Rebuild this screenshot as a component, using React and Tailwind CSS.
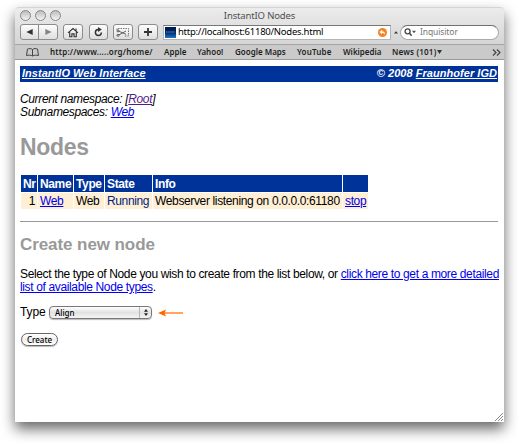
import React from "react";

const toolButton =
  "flex h-4 items-center justify-center rounded-[3px] border border-[#8c8c8c] bg-gradient-to-b from-[#fdfdfd] to-[#dedede]";

function ToolButton({ className, children }) {
  return <button className={`${toolButton} ${className}`}>{children}</button>;
}

function TrafficLight() {
  return <span className="size-[11px] rounded-full border border-[#878787] bg-gradient-to-b from-[#bdbdbd] to-[#f4f4f4]" />;
}

function TitleBar() {
  return (
    <div className="grid h-[15px] grid-cols-[60px_1fr_60px] items-center">
      <div className="flex gap-[4px] pl-[5px]">
        <TrafficLight />
        <TrafficLight />
        <TrafficLight />
      </div>
      <div className="text-center text-[9.5px] leading-none tracking-[-0.15px] text-[#505050]">InstantIO Nodes</div>
    </div>
  );
}

function Toolbar() {
  return (
    <div className="flex h-[21px] items-center pb-[3px] pl-[5px] pr-[5px]">
      <div className="flex w-[38px]">
        <ToolButton className="w-[19px] rounded-r-none">
          <svg width="7" height="6"><path d="M0.3 3 6.7 0v6z" fill="#333" /></svg>
        </ToolButton>
        <ToolButton className="-ml-px w-[20px] rounded-l-none">
          <svg width="7" height="6"><path d="M6.7 3 .3 0v6z" fill="#848484" /></svg>
        </ToolButton>
      </div>
      <ToolButton className="ml-[5px] w-5">
        <svg width="12" height="11" viewBox="0 0 12 11" fill="none" stroke="#333" strokeWidth="1.1">
          <path d="M1 5.900 6 1.500l5 4.400M2.700 5.200v4.600h2.200V6.900h2.200v2.900h2.200V5.200M9 1.500v2.200" />
        </svg>
      </ToolButton>
      <ToolButton className="ml-[6px] w-[19px]">
        <svg width="9" height="10" viewBox="0 0 9 10">
          <path d="M4.2 2.4A3 3 0 1 0 7.4 5.5" fill="none" stroke="#333" strokeWidth="1.5" />
          <path d="M4 0l3.8 2.5L4 5z" fill="#333" />
        </svg>
      </ToolButton>
      <ToolButton className="ml-[5px] w-5">
        <svg width="14" height="11" viewBox="0 0 14 11" fill="none" stroke="#555">
          <path d="M1 3V1.500h11.500v7.500H8" strokeDasharray="1.5 1" strokeWidth=".8" />
          <path d="M2.8 4.200 10 7.300M2.8 8 10 4" strokeWidth=".9" />
          <circle cx="2" cy="3.900" r="1" /><circle cx="2" cy="8.300" r="1" />
        </svg>
      </ToolButton>
      <ToolButton className="ml-[5px] w-5">
        <svg width="8" height="8"><path d="M4 0v8M0 4h8" stroke="#333" strokeWidth="1.8" /></svg>
      </ToolButton>
      <div className="ml-[5px] flex h-[15px] w-[228px] items-center border border-[#b5b5b5] border-t-[#777] bg-white pl-px pr-[3px]">
        <span className="flex size-[11px] shrink-0 items-center justify-center bg-gradient-to-b from-[#001746] via-[#00296d] to-[#2577c5]">
          <svg width="11" height="4"><path d="M1 2h9" stroke="#a9c5e4" strokeOpacity=".7" strokeWidth="1.200" strokeDasharray="1 .5" /></svg>
        </span>
        <span className="ml-[2px] flex-1 whitespace-nowrap text-[9.5px] leading-none tracking-[-0.25px] text-black">http://localhost:61180/Nodes.html</span>
        <svg width="9" height="9" viewBox="0 0 9 9">
          <circle cx="4.5" cy="4.5" r="4.5" fill="#f58220" />
          <path d="M1.500 4 4 1.800v1.500c2.700 0 3.400 1.500 2.300 3.800.1-1.500-.7-2-2.300-2v1.300z" fill="#fff" />
        </svg>
      </div>
      <svg className="ml-[3px] shrink-0" width="4" height="3"><path d="M0 2.600 2 .2l2 2.400z" fill="#333" /></svg>
      <div className="ml-[2px] flex h-[15px] w-[99px] items-center rounded-full border border-[#aaa] border-t-[#707070] bg-white pl-[3px]">
        <svg width="13" height="9" viewBox="0 0 13 9">
          <circle cx="3.6" cy="3.3" r="2.5" fill="none" stroke="#444" strokeWidth="1.3" />
          <path d="m5.300 5 2.300 2.700" stroke="#444" strokeWidth="1.5" />
          <path d="M8 2.700h4L10 5.200z" fill="#555" />
        </svg>
        <span className="ml-[3px] text-[8.5px] leading-none tracking-[-0.1px] text-[#777]">Inquisitor</span>
      </div>
    </div>
  );
}

function BookmarksBar() {
  return (
    <div className="flex h-[16px] items-center border-y border-t-[#a4a4a4] border-b-[#999] bg-[#cacaca] pl-[11px] pr-[3px] text-[8px] font-semibold leading-none text-[#1e1e1e]">
      <svg className="shrink-0" width="13" height="9" viewBox="0 0 13 9" fill="none" stroke="#444">
        <path d="M6.500 1.500C5 .2 2.700.5 1.500 1L.5 7.500c2-.5 4.600-.5 6 .5 1.400-1 4-1 6-.5l-1-6.500C10.200.5 8 .2 6.500 1.500V8" />
      </svg>
      <span className="ml-[11px] w-[114px] whitespace-nowrap tracking-[0.2px]">http://www.....org/home/</span>
      <span className="w-[33px]">Apple</span>
      <span className="w-[38px]">Yahoo!</span>
      <span className="w-[62px] whitespace-nowrap">Google Maps</span>
      <span className="w-[46px] tracking-[0.15px]">YouTube</span>
      <span className="w-[49px]">Wikipedia</span>
      <span className="flex items-center whitespace-nowrap tracking-[0.200px]">
        News (101)
        <svg className="ml-px" width="5" height="4"><path d="M0 0h5L2.500 4z" fill="#333" /></svg>
      </span>
      <svg className="ml-auto" width="9" height="7" fill="none" stroke="#444" strokeWidth="1.2">
        <path d="m1 .5 3 3-3 3M5 .5l3 3-3 3" />
      </svg>
    </div>
  );
}

function Link({ children, visited }) {
  return <a className={visited ? "text-[#551a8b] underline" : "text-[#0000ee] underline"}>{children}</a>;
}

function NodesTable() {
  return (
    <table className="mt-[13px] w-[349px] table-fixed border-separate border-spacing-px text-left leading-[14px]">
      <colgroup>
        <col className="w-[16px]" /><col className="w-[35px]" /><col className="w-[30px]" />
        <col className="w-[47px]" /><col className="w-[189px]" /><col className="w-[25px]" />
      </colgroup>
      <thead>
        <tr className="h-[17px] bg-[#003399] text-white">
          {["Nr", "Name", "Type", "State", "Info", ""].map((h, i) => (
            <th key={i} className="whitespace-nowrap p-0 pl-[2px] font-bold">{h}</th>
          ))}
        </tr>
      </thead>
      <tbody>
        <tr className="h-4 bg-[#ffefd5]">
          <td className="p-0 pr-[2px] text-right">1</td>
          <td className="p-0 pl-[2px]"><Link>Web</Link></td>
          <td className="p-0 pl-[2px]">Web</td>
          <td className="p-0 pl-[2px] text-[#00247d]">Running</td>
          <td className="whitespace-nowrap p-0 pl-[2px]">Webserver listening on 0.0.0.0:61180</td>
          <td className="p-0 pl-[2px]"><Link>stop</Link></td>
        </tr>
      </tbody>
    </table>
  );
}

function Page() {
  return (
    <main className="flex-1 bg-white pl-[5px] pr-[6px] pt-[6px] font-['Helvetica','Liberation_Sans',sans-serif] text-[12px] leading-[13px] tracking-[-0.36px] text-black">
      <header className="flex h-[16px] items-center justify-between bg-[#003399] pb-px pl-[2px] pr-px text-[11px] font-bold italic tracking-[0.04px] text-white">
        <a className="underline">InstantIO Web Interface</a>
        <span>© 2008 <a className="underline">Fraunhofer IGD</a></span>
      </header>
      <p className="mt-[11px] italic">
        Current namespace: [<Link visited>Root</Link>]<br />
        Subnamespaces: <Link>Web</Link>
      </p>
      <h1 className="mt-[14px] text-[23px] font-bold leading-[28px] tracking-[-0.3px] text-[#999]">Nodes</h1>
      <NodesTable />
      <hr className="mt-[11px] border-t border-[#999]" />
      <h2 className="mt-[13px] text-[17px] font-bold leading-[20px] tracking-[-0.08px] text-[#999]">Create new node</h2>
      <p className="mt-[13px] whitespace-nowrap">
        Select the type of Node you wish to create from the list below, or <Link>click here to get a more detailed</Link><br />
        <Link>list of available Node types</Link>.
      </p>
      <div className="mt-[11px] flex h-[15px] items-center">
        <span className="w-[29px] tracking-[-0.1px]">Type</span>
        <button className="flex h-[13px] w-[103px] items-center rounded-[4px] border border-[#777] bg-gradient-to-b from-white via-[#e2e2e2] to-[#f5f5f5] pl-[5px] font-['Noto_Sans',sans-serif] text-[8px] font-medium leading-none tracking-normal shadow-[0_1px_1px_#bbb]">
          Align
          <span className="ml-auto flex h-full w-[12px] items-center justify-center border-l border-[#b5b5b5]">
            <svg width="4" height="7"><path d="M0 2.700 2 0l2 2.700zM0 4.300 2 7l2-2.700z" fill="#222" /></svg>
          </span>
        </button>
        <svg className="ml-[6px]" width="25" height="8"><path d="M5 4h20" stroke="#f60" strokeWidth="1.2" /><path d="M0 4 8 .5 6.500 4 8 7.500z" fill="#f60" /></svg>
      </div>
      <button className="ml-px mt-[13px] flex h-[13px] w-[37px] items-center justify-center rounded-full border border-[#666] bg-gradient-to-b from-white via-[#eee] to-white font-['Noto_Sans',sans-serif] text-[8px] font-medium leading-none tracking-normal shadow-[0_1px_1px_#bbb]">
        Create
      </button>
    </main>
  );
}

export default function App() {
  return (
    <div className="h-[443px] w-[518px] overflow-hidden bg-white pl-[15px] pt-[7px] font-['Noto_Sans',sans-serif]">
      <div className="relative flex h-[415px] w-[489px] flex-col rounded-t-[4px] shadow-[0_7px_14px_rgba(0,0,0,0.6)]">
        <div className="rounded-t-[4px] border-t border-[#d5d5d5] bg-gradient-to-b from-[#ececec] to-[#cbcbcb]">
          <TitleBar />
          <Toolbar />
          <BookmarksBar />
        </div>
        <Page />
        <svg className="absolute bottom-px right-px" width="8" height="8" stroke="#888"><path d="M0 8 8 0M3 8l5-5M6 8l2-2" /></svg>
      </div>
    </div>
  );
}
